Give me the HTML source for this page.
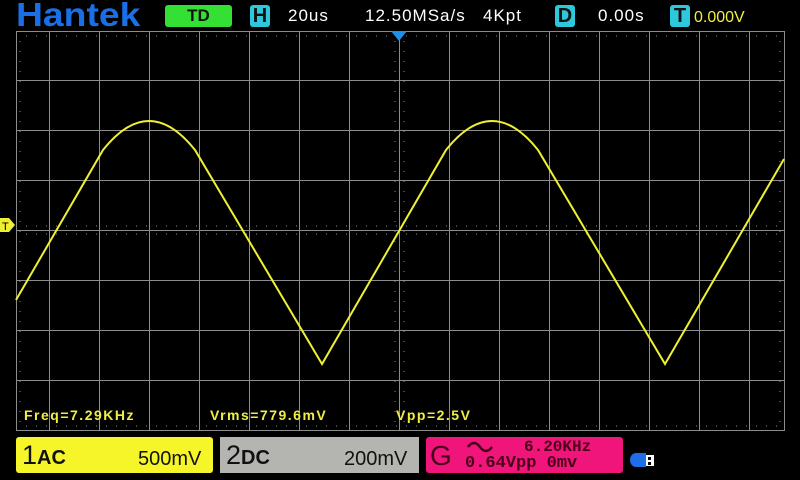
<!DOCTYPE html>
<html><head><meta charset="utf-8"><style>
body{margin:0;width:800px;height:480px;background:#000;overflow:hidden;position:relative;font-family:"Liberation Sans",sans-serif}
.a{position:absolute;white-space:nowrap}
.w{color:#fff;font-size:17px;top:6px;letter-spacing:1px}
.box{position:absolute;background:#2ec8dc;border-radius:3px;width:20px;height:22px;top:5px;color:#111;font-weight:bold;font-size:20px;text-align:center;line-height:22px}
.m{color:#eeee44;font-size:14px;top:407px;letter-spacing:1.5px;font-weight:bold}
</style></head><body>
<div class="a" style="left:16px;top:-4px;color:#1a6fe6;font-size:33px;line-height:38px;font-weight:bold;letter-spacing:0px;transform:scaleX(1.13);transform-origin:left">Hantek</div>
<div class="a" style="left:165px;top:5px;width:67px;height:22px;background:#33e033;border-radius:3px;text-align:center;line-height:22px;font-size:17px;font-weight:bold;color:#111">TD</div>
<div class="box" style="left:250px">H</div>
<div class="a w" style="left:288px">20us</div>
<div class="a w" style="left:365px">12.50MSa/s</div>
<div class="a w" style="left:483px">4Kpt</div>
<div class="box" style="left:555px">D</div>
<div class="a w" style="left:598px">0.00s</div>
<div class="box" style="left:670px">T</div>
<div class="a" style="left:694px;top:9px;color:#eeee44;font-size:16px">0.000V</div>
<svg class="a" style="left:0;top:0" width="800" height="480">
<g stroke="#8c8c8c" stroke-width="1" fill="none">
<rect x="16.5" y="31.5" width="768" height="399"/>
<path d="M49.5 31V431M99.5 31V431M149.5 31V431M199.5 31V431M249.5 31V431M299.5 31V431M349.5 31V431M399.5 31V431M449.5 31V431M499.5 31V431M549.5 31V431M599.5 31V431M649.5 31V431M699.5 31V431M749.5 31V431"/>
<path d="M16 80.5H784M16 130.5H784M16 180.5H784M16 230.5H784M16 280.5H784M16 330.5H784M16 380.5H784"/>
<path stroke-dasharray="1 9" d="M16 36H784M16 426H784M16 226H784M16 234H784"/>
<path stroke-dasharray="1 9" d="M20 31V431M780 31V431M395 31V431M404 31V431"/>
</g>
<path d="M16,300 L103,150 Q149,92 195,150 L322,364 L446,150 Q492,92 538,150 L665,364 L784,159" stroke="#f0f032" stroke-width="2" fill="none"/>
<path d="M391,31 L407,31 L399,41Z" fill="#1e90e8"/>
<path d="M0,218 L9,218 L15,225 L9,232 L0,232Z" fill="#f0f032"/>
<text x="2" y="230" font-size="11" fill="#000" font-family="Liberation Sans">T</text>
<rect x="426" y="437" width="197" height="36" rx="3" fill="#f0157a"/>
<path d="M468,447 q6,-8 12,0 t12,0" stroke="#4a0018" stroke-width="2.5" fill="none"/>
<path d="M636,453 h10 v14 h-10 a6,7 0 0 1 0,-14Z" fill="#1e6ee8"/>
<rect x="646" y="455" width="8" height="11" fill="#fff"/>
<rect x="648" y="457" width="3" height="3" fill="#000"/><rect x="648" y="462" width="3" height="3" fill="#000"/>
</svg>
<div class="a m" style="left:24px">Freq=7.29KHz</div>
<div class="a m" style="left:210px">Vrms=779.6mV</div>
<div class="a m" style="left:396px">Vpp=2.5V</div>
<div class="a" style="left:16px;top:437px;width:197px;height:36px;background:#f5f52a;border-radius:3px"></div>
<div class="a" style="left:22px;top:440px;font-size:27px;color:#111">1<span style="font-size:20px;font-weight:bold">AC</span></div>
<div class="a" style="left:138px;top:448px;font-size:20px;color:#111">500mV</div>
<div class="a" style="left:220px;top:437px;width:199px;height:36px;background:#b4b4b0"></div>
<div class="a" style="left:226px;top:440px;font-size:27px;color:#111">2<span style="font-size:20px;font-weight:bold">DC</span></div>
<div class="a" style="left:344px;top:448px;font-size:20px;color:#111">200mV</div>
<div class="a" style="left:430px;top:440px;font-size:28px;color:#4a0018">G</div>
<div class="a" style="left:524px;top:438px;font-size:16px;font-weight:bold;color:#4a0018;font-family:'Liberation Mono',monospace">6.20KHz</div>
<div class="a" style="left:465px;top:454px;font-size:17px;font-weight:bold;color:#4a0018;font-family:'Liberation Mono',monospace">0.64Vpp 0mv</div>
</body></html>
